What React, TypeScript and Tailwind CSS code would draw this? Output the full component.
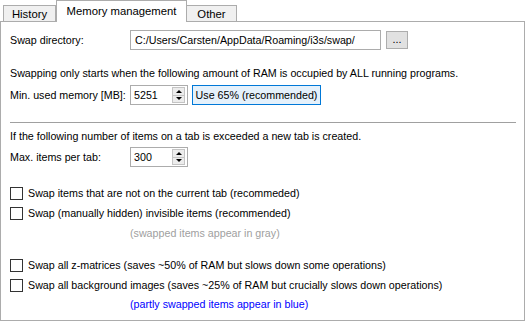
import React from 'react';

const Spin = ({ value }: { value: string }) => (
  <div className="flex h-[20px] w-[58px] shrink-0 items-center border border-[#acacac] bg-white pl-[3px]">
    <span className="flex-1">{value}</span>
    <div className="mr-[2px] flex h-[16px] w-[13px] flex-col border border-[#c4c4c4] bg-[#ececec]">
      <div className="flex flex-1 items-center justify-center border-b border-[#c4c4c4]">
        <div className="h-0 w-0 border-x-[3px] border-b-[3px] border-x-transparent border-b-black" />
      </div>
      <div className="flex flex-1 items-center justify-center">
        <div className="h-0 w-0 border-x-[3px] border-t-[3px] border-x-transparent border-t-black" />
      </div>
    </div>
  </div>
);

const Check = ({ label }: { label: string }) => (
  <div className="flex h-[20px] items-center">
    <div className="h-[13px] w-[13px] shrink-0 border border-[#333333] bg-white" />
    <span className="ml-[5px]">{label}</span>
  </div>
);

const App = () => {
  return (
    <div className="h-[322px] w-[526px] whitespace-nowrap bg-white text-[10.7px] leading-[14px] text-black [font-family:'Liberation_Sans',Arial,sans-serif]">
      <div className="flex h-[21px] items-end pl-[3px] text-[11.3px]">
        <div className="flex h-[16px] w-[53px] items-center justify-center border border-b-0 border-[#acacac] bg-[#f0f0f0]">
          History
        </div>
        <div className="relative z-10 -mb-px flex h-[22px] w-[131px] items-center justify-center border border-b-0 border-[#acacac] bg-white pb-[2px]">
          Memory management
        </div>
        <div className="flex h-[16px] w-[50px] items-center justify-center border border-b-0 border-l-0 border-[#acacac] bg-[#f0f0f0]">
          Other
        </div>
      </div>

      <div className="flex h-[300px] w-[525px] flex-col border border-[#acacac] pl-[9px]">
        <div className="mt-[8px] flex h-[20px] items-center">
          <span className="w-[120px] shrink-0">Swap directory:</span>
          <div className="flex h-[20px] w-[251px] shrink-0 items-center border border-[#acacac] pl-[4px]">
            C:/Users/Carsten/AppData/Roaming/i3s/swap/
          </div>
          <div className="ml-[5px] flex h-[18px] w-[22px] shrink-0 items-center justify-center border border-[#adadad] bg-[#e1e1e1] pb-[3px]">
            ...
          </div>
        </div>

        <div className="mt-[16px] flex h-[14px] items-center">
          Swapping only starts when the following amount of RAM is occupied by ALL running programs.
        </div>

        <div className="mt-[5px] flex h-[20px] items-center">
          <span className="w-[120px] shrink-0">Min. used memory [MB]:</span>
          <Spin value="5251" />
          <div className="ml-[4px] flex h-[20px] w-[129px] shrink-0 items-center justify-center border border-[#0078d7] bg-[#e5f1fb]">
            Use 65% (recommended)
          </div>
        </div>

        <div className="mr-[8px] mt-[17px] h-px bg-[#a0a0a0]" />

        <div className="mt-[6px] flex h-[14px] items-center">
          If the following number of items on a tab is exceeded a new tab is created.
        </div>

        <div className="mt-[4px] flex h-[20px] items-center">
          <span className="w-[120px] shrink-0">Max. items per tab:</span>
          <Spin value="300" />
        </div>

        <div className="mt-[16px]">
          <Check label="Swap items that are not on the current tab (recommeded)" />
          <Check label="Swap (manually hidden) invisible items (recommended)" />
          <div className="flex h-[20px] items-center pl-[120px] text-[#a0a0a0]">(swapped items appear in gray)</div>
        </div>

        <div className="mt-[12px]">
          <Check label="Swap all z-matrices (saves ~50% of RAM but slows down some operations)" />
          <Check label="Swap all background images (saves ~25% of RAM but crucially slows down operations)" />
          <div className="flex h-[18px] items-center pl-[120px] text-[#0000ff]">(partly swapped items appear in blue)</div>
        </div>
      </div>
    </div>
  );
};

export default App;
